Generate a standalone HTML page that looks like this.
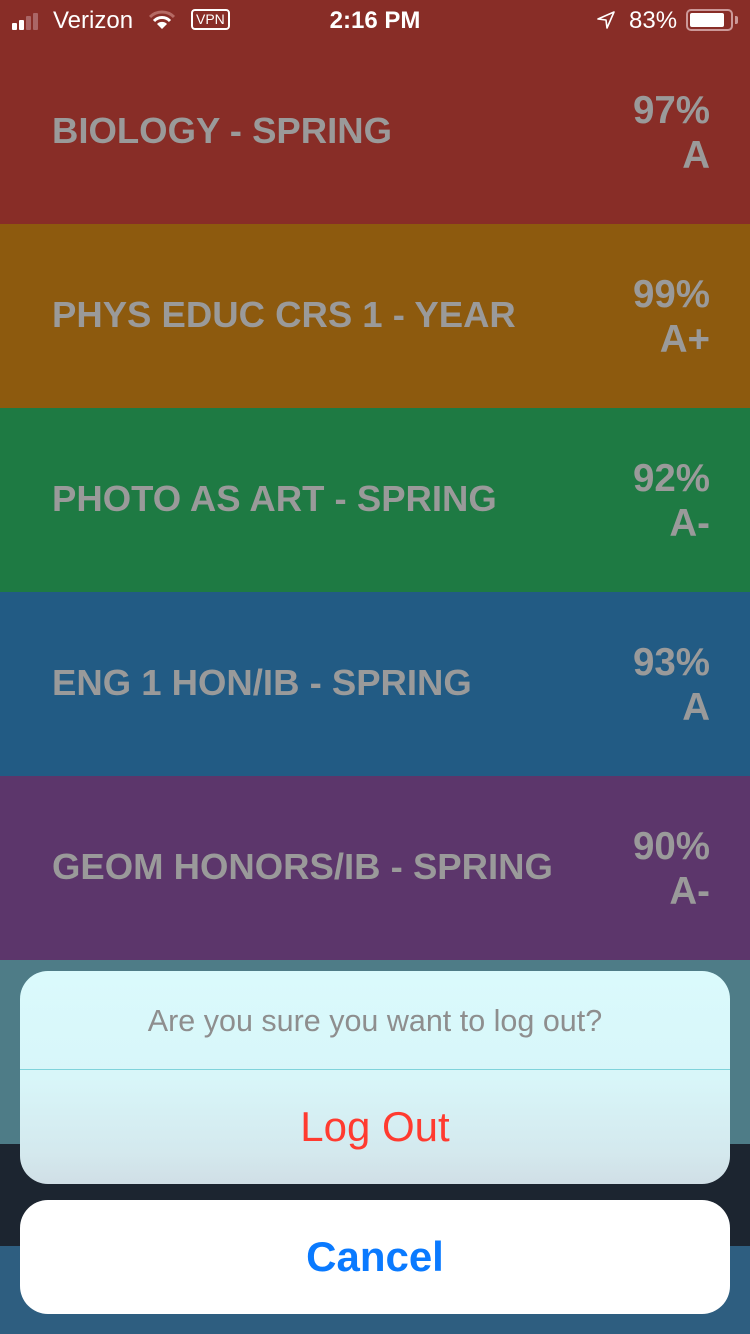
<!DOCTYPE html>
<html><head><meta charset="utf-8"><style>
*{margin:0;padding:0;box-sizing:border-box}
body{width:750px;height:1334px;overflow:hidden;font-family:"Liberation Sans",sans-serif;position:relative;background:#2e5e80}
.row{position:absolute;left:0;width:750px}
.t{position:absolute;left:52px;font-weight:bold;font-size:36.5px;color:#9a9a9a;white-space:nowrap}
.g{position:absolute;right:40px;font-weight:bold;font-size:38.5px;color:#9a9a9a;text-align:right;line-height:45px}
.sb{position:absolute;top:0;left:0;width:750px;height:40px;color:#fff;font-size:24px}
</style></head><body>
<div class="row" style="top:0;height:224px;background:#882d27"><div class="t" style="top:110px">BIOLOGY - SPRING</div><div class="g" style="top:88px">97%<br>A</div></div>
<div class="row" style="top:224px;height:184px;background:#8d5a0e"><div class="t" style="top:70px">PHYS EDUC CRS 1 - YEAR</div><div class="g" style="top:48px">99%<br>A+</div></div>
<div class="row" style="top:408px;height:184px;background:#1e7a43"><div class="t" style="top:70px">PHOTO AS ART - SPRING</div><div class="g" style="top:48px">92%<br>A-</div></div>
<div class="row" style="top:592px;height:184px;background:#225b84"><div class="t" style="top:70px">ENG 1 HON/IB - SPRING</div><div class="g" style="top:48px">93%<br>A</div></div>
<div class="row" style="top:776px;height:184px;background:#5c366b"><div class="t" style="top:70px">GEOM HONORS/IB - SPRING</div><div class="g" style="top:48px">90%<br>A-</div></div>
<div class="row" style="top:960px;height:184px;background:#4e7c87"></div>
<div class="row" style="top:1144px;height:102px;background:#1c2530"></div>
<div class="sb">
<div style="position:absolute;left:12px;top:13px;display:flex;gap:2px;align-items:flex-end">
<div style="width:5px;height:7px;background:#fff;border-radius:1px"></div><div style="width:5px;height:10px;background:#fff;border-radius:1px"></div><div style="width:5px;height:14px;background:#a66;border-radius:1px"></div><div style="width:5px;height:17px;background:#a66;border-radius:1px"></div></div>
<div style="position:absolute;left:53px;top:7px">Verizon</div>
<svg style="position:absolute;left:149px;top:10px" width="26" height="20" viewBox="0 0 26 20"><path d="M1 7 A17 17 0 0 1 25 7" stroke="#b56a64" stroke-width="3" fill="none"/><path d="M5 11 A11 11 0 0 1 21 11" stroke="#fff" stroke-width="3" fill="none"/><path d="M13 19 L8 14 A7 7 0 0 1 18 14 Z" fill="#fff"/></svg>
<div style="position:absolute;left:191px;top:9px;border:2px solid #fff;border-radius:4px;font-size:14px;padding:0 3px;line-height:17px">VPN</div>
<div style="position:absolute;left:0;width:750px;text-align:center;top:7px;font-weight:bold">2:16 PM</div>
<svg style="position:absolute;left:596px;top:10px" width="20" height="20" viewBox="0 0 20 20"><path d="M18 2 L2 9 L10 10 L11 18 Z" stroke="#fff" stroke-width="1.6" fill="none" stroke-linejoin="round"/></svg>
<div style="position:absolute;left:629px;top:7px">83%</div>
<div style="position:absolute;left:686px;top:9px;width:47px;height:22px;border:2px solid #c99;border-radius:5px;padding:2px"><div style="width:34px;height:14px;background:#fff;border-radius:2px"></div></div>
<div style="position:absolute;left:735px;top:16px;width:3px;height:8px;background:#c99;border-radius:0 2px 2px 0"></div>
</div>
<div style="position:absolute;left:20px;top:971px;width:710px;height:213px;border-radius:28px;overflow:hidden;background:linear-gradient(#dafafc 0%,#d8f6f9 50%,#d4e9ee 85%,#d0dfe6 100%)">
<div style="height:98px;line-height:100px;text-align:center;font-size:30.5px;color:#8e8e8e">Are you sure you want to log out?</div>
<div style="height:1px;background:#7fd3db"></div>
<div style="height:114px;line-height:114px;text-align:center;font-size:42px;color:#ff3b30">Log Out</div>
</div>
<div style="position:absolute;left:20px;top:1200px;width:710px;height:114px;border-radius:28px;background:#fff;text-align:center;line-height:114px;font-size:42px;font-weight:bold;color:#0a7aff">Cancel</div>
</body></html>
